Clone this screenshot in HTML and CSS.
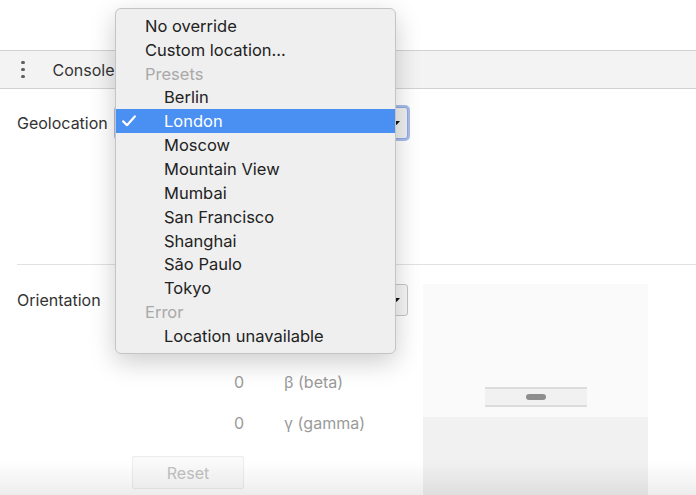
FILE: index.html
```html
<!DOCTYPE html>
<html lang="en">

<head>
  <meta charset="UTF-8" />
  <title>Sensors</title>
  <link rel="stylesheet" href="styles.css">
</head>

<body>
  <div class="top-space"></div>

  <div class="toolbar">
    <span class="kebab"><i></i><i></i><i></i></span>
    <span class="tab">Console</span>
  </div>

  <div class="sensors">
    <div class="row">
      <span class="label">Geolocation</span>
      <div class="select focused">
        <svg class="arrow" width="7" height="4" viewBox="0 0 7 4"><path d="M0 0h7L3.5 4z" fill="#111"/></svg>
      </div>
    </div>

    <div class="divider"></div>

    <div class="orient">
      <div class="orient-left">
        <div class="row">
          <span class="label">Orientation</span>
          <div class="select">
            <svg class="arrow" width="7" height="4" viewBox="0 0 7 4"><path d="M0 0h7L3.5 4z" fill="#111"/></svg>
          </div>
        </div>
        <div class="axes">
          <!-- fila alpha tapada por el menu -->
          <div class="axis"></div>
          <div class="axis"><span class="val">0</span><span class="name">β (beta)</span></div>
          <div class="axis"><span class="val">0</span><span class="name">γ (gamma)</span></div>
        </div>
        <button class="reset">Reset</button>
      </div>

      <div class="device-box">
        <div class="box-top">
          <div class="device"><span class="pill"></span></div>
        </div>
        <div class="box-bottom"></div>
      </div>
    </div>
  </div>

  <!-- menu abierto del select de geolocation -->
  <ul class="menu">
    <li><span class="check"></span><span>No override</span></li>
    <li><span class="check"></span><span>Custom location...</span></li>
    <li class="group"><span class="check"></span><span>Presets</span></li>
    <li class="sub"><span class="check"></span><span>Berlin</span></li>
    <li class="sub selected">
      <span class="check"><svg width="14" height="12" viewBox="0 0 14 12"><path d="M1.2 6.4L5 10.2L12.8 1.4" fill="none" stroke="#fff" stroke-width="2.2" stroke-linecap="round" stroke-linejoin="round"/></svg></span>
      <span>London</span>
    </li>
    <li class="sub"><span class="check"></span><span>Moscow</span></li>
    <li class="sub"><span class="check"></span><span>Mountain View</span></li>
    <li class="sub"><span class="check"></span><span>Mumbai</span></li>
    <li class="sub"><span class="check"></span><span>San Francisco</span></li>
    <li class="sub"><span class="check"></span><span>Shanghai</span></li>
    <li class="sub"><span class="check"></span><span>São Paulo</span></li>
    <li class="sub"><span class="check"></span><span>Tokyo</span></li>
    <li class="group"><span class="check"></span><span>Error</span></li>
    <li class="sub"><span class="check"></span><span>Location unavailable</span></li>
  </ul>

  <div class="vignette"></div>
</body>

</html>
```

FILE: styles.css
```css
    body {
      margin: 0;
      height: 495px;
      overflow: hidden;
      background-color: #fff;
      font-family: Inter, "Liberation Sans", sans-serif;
      font-size: 16px;
      color: #333;
    }

    .top-space {
      height: 50px;
    }

    .toolbar {
      display: flex;
      align-items: center;
      height: 37px;
      background-color: #f3f3f3;
      border-top: 1px solid #d2d2d2;
      border-bottom: 1px solid #d2d2d2;
    }

    .kebab {
      display: flex;
      flex-direction: column;
      gap: 3.5px;
      margin-left: 21px;
    }

    .kebab i {
      display: block;
      width: 3.5px;
      height: 3.5px;
      border-radius: 50%;
      background-color: #5f5f5f;
    }

    .tab {
      margin-left: 28px;
      color: #333;
    }

    .sensors {
      padding: 18px 0 0 17px;
    }

    .row {
      display: grid;
      grid-template-columns: 99px 292px;
      align-items: center;
      height: 32px;
    }

    .select {
      display: flex;
      align-items: center;
      justify-content: flex-end;
      height: 32px;
      box-sizing: border-box;
      padding-right: 7px;
      border: 1px solid #c6c6c6;
      border-radius: 3px;
      background-color: #f6f6f6;
    }

    .select.focused {
      border-color: #8ea9e2;
      box-shadow: 0 0 0 2px #a9bdea;
      background-color: #efefef;
    }

    .divider {
      margin-top: 125px;
      border-top: 1px solid #e2e2e2;
    }

    .orient {
      display: flex;
      margin-top: 19px;
    }

    .orient-left {
      width: 391px;
    }

    .axes {
      margin-top: 4px;
    }

    .axis {
      display: flex;
      align-items: center;
      height: 41px;
      padding-left: 217px;
      color: #9a9a9a;
    }

    .axis .val {
      width: 50px;
    }

    .reset {
      display: block;
      width: 112px;
      height: 33px;
      margin: 13px 0 0 115px;
      background-color: #fafafa;
      border: 1px solid #ececec;
      border-radius: 2px;
      font-family: inherit;
      font-size: 16px;
      color: #c2c2c2;
    }

    .device-box {
      display: flex;
      flex-direction: column;
      width: 225px;
      height: 211px;
      margin-left: 15px;
    }

    .box-top {
      display: flex;
      justify-content: center;
      align-items: flex-end;
      height: 133px;
      box-sizing: border-box;
      padding-bottom: 10px;
      background-color: #fafafa;
    }

    .device {
      display: flex;
      justify-content: center;
      align-items: center;
      width: 102px;
      height: 20px;
      box-sizing: border-box;
      background-color: #f1f1f1;
      border-top: 2px solid #dcdcdc;
      border-bottom: 2px solid #dcdcdc;
    }

    .pill {
      width: 20px;
      height: 6px;
      border-radius: 3px;
      background-color: #8e8e8e;
    }

    .box-bottom {
      flex: 1;
      background-color: #f1f1f1;
    }

    /* menu desplegable */
    .menu {
      position: absolute;
      left: 115px;
      top: 8px;
      width: 281px;
      box-sizing: border-box;
      margin: 0;
      padding: 5px 0;
      list-style: none;
      background-color: #efefef;
      border: 1px solid #c4c4c4;
      border-radius: 6px;
      box-shadow: 0 8px 26px rgba(0, 0, 0, 0.2);
      font-size: 16.5px;
      color: #222;
    }

    .menu li {
      display: flex;
      align-items: center;
      height: 23.85px;
    }

    .menu .check {
      display: flex;
      align-items: center;
      width: 23px;
      padding-left: 6px;
    }

    .menu li.sub .check {
      width: 42px;
    }

    .menu li.group {
      color: #a9a9a9;
    }

    .menu li.selected {
      background-color: #4a8ff2;
      color: #fff;
    }

    .vignette {
      position: fixed;
      left: 0;
      right: 0;
      bottom: 0;
      height: 34px;
      pointer-events: none;
      background: linear-gradient(to bottom, rgba(0, 0, 0, 0), rgba(0, 0, 0, 0.07));
    }
```
